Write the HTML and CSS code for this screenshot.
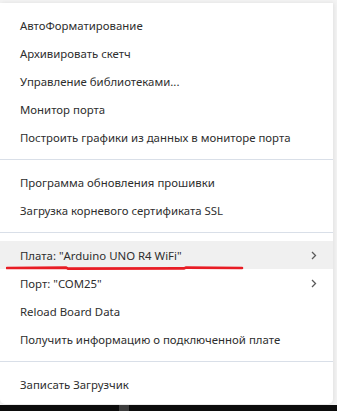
FILE: index.html
```html
<html lang="en"><head>
    <meta charset="UTF-8">
    <meta name="viewport" content="width=device-width, initial-scale=1.0">
    <title>Инструменты</title>
    <link rel="stylesheet" href="styles.css">
</head>
<body>
    <div class="menu">
        <div class="item">АвтоФорматирование</div>
        <div class="item">Архивировать скетч</div>
        <div class="item">Управление библиотеками...</div>
        <div class="item">Монитор порта</div>
        <div class="item">Построить графики из данных в мониторе порта</div>
        <div class="separator"></div>
        <div class="item">Программа обновления прошивки</div>
        <div class="item">Загрузка корневого сертификата SSL</div>
        <div class="separator"></div>
        <div class="item active">
            <span>Плата: "Arduino UNO R4 WiFi"</span>
            <svg class="chevron" width="6" height="9" viewBox="0 0 6 9"><path d="M1 1 L4.5 4.5 L1 8" fill="none" stroke="#5a5a5a" stroke-width="1.3"/></svg>
            <!-- red hand-drawn underline -->
            <svg class="mark" width="240" height="6" viewBox="0 0 240 6"><path d="M1 3 L60 2.6 L62 3.6 L178 3.4 L180 2.6 L236 3" fill="none" stroke="#e81c24" stroke-width="2.6" stroke-linecap="round"/></svg>
        </div>
        <div class="item">
            <span>Порт: "COM25"</span>
            <svg class="chevron" width="6" height="9" viewBox="0 0 6 9"><path d="M1 1 L4.5 4.5 L1 8" fill="none" stroke="#5a5a5a" stroke-width="1.3"/></svg>
        </div>
        <div class="item">Reload Board Data</div>
        <div class="item">Получить информацию о подключенной плате</div>
        <div class="separator"></div>
        <div class="item">Записать Загрузчик</div>
    </div>
    <div class="taskbar">
        <div class="task"></div>
    </div>
</body></html>
```

FILE: styles.css
```css
body {
    margin: 0;
    padding: 0;
    height: 411px;
    overflow: hidden;
    background-color: #f3f3f3;
    font-family: "Segoe UI", "Noto Sans", "Open Sans", sans-serif;
}
.menu {
    width: 333px;
    margin-top: 3px;
    padding: 8px 0 4px;
    box-sizing: border-box;
    height: 401px;
    background-color: #fff;
    border-radius: 0 0 5px 5px;
    box-shadow: 1px 0 4px rgba(0, 0, 0, 0.08);
}
.item {
    position: relative;
    display: flex;
    align-items: center;
    justify-content: space-between;
    height: 28px;
    padding: 0 20px;
    font-size: 11.4px;
    color: #2e2e2e;
    white-space: nowrap;
}
.item.active {
    background-color: #f0f0f0;
}
.chevron {
    margin-right: -4px;
}
.mark {
    position: absolute;
    left: 6px;
    bottom: -2px;
}
.separator {
    height: 17px;
    display: flex;
    align-items: center;
}
.separator::after {
    content: "";
    flex: 1;
    height: 1px;
    background-color: #d9dfe8;
}
.taskbar {
    display: flex;
    margin-top: 1px;
    height: 6px;
    background-color: #0c0c0c;
}
.task {
    margin-left: 119px;
    width: 10px;
    background-color: #3c3c3c;
}
```
